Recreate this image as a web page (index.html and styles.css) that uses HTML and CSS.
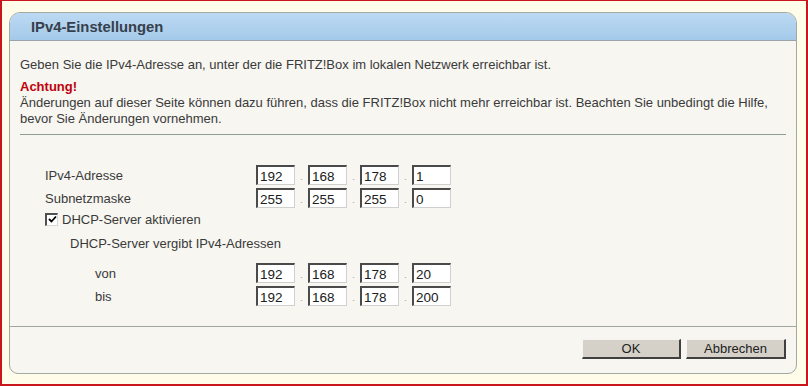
FILE: index.html
```html
<!DOCTYPE html>
<html lang="de">
<head>
<meta charset="utf-8">
<title>IPv4-Einstellungen</title>
<link rel="stylesheet" href="styles.css">
</head>
<body>
<div class="frame">
  <div class="panel">
    <div class="panel-head">IPv4-Einstellungen</div>
    <div class="panel-body">
      <p class="intro">Geben Sie die IPv4-Adresse an, unter der die FRITZ!Box im lokalen Netzwerk erreichbar ist.</p>
      <p class="warn-title">Achtung!</p>
      <p class="warn-text">Änderungen auf dieser Seite können dazu führen, dass die FRITZ!Box nicht mehr erreichbar ist. Beachten Sie unbedingt die Hilfe, bevor Sie Änderungen vornehmen.</p>
      <hr class="sep">
      <div class="form">
        <div class="row">
          <span class="label">IPv4-Adresse</span>
          <span class="ip"><input class="oct" value="192"><span class="dot">.</span><input class="oct" value="168"><span class="dot">.</span><input class="oct" value="178"><span class="dot">.</span><input class="oct" value="1"></span>
        </div>
        <div class="row">
          <span class="label">Subnetzmaske</span>
          <span class="ip"><input class="oct" value="255"><span class="dot">.</span><input class="oct" value="255"><span class="dot">.</span><input class="oct" value="255"><span class="dot">.</span><input class="oct" value="0"></span>
        </div>
        <div class="check-row">
          <span class="checkbox"><svg width="9" height="9" viewBox="0 0 9 9"><path d="M1 4 L3.5 6.5 L8 1.5" fill="none" stroke="#000" stroke-width="1.8"/></svg></span>
          <span>DHCP-Server aktivieren</span>
        </div>
        <div class="sub-title">DHCP-Server vergibt IPv4-Adressen</div>
        <div class="row">
          <span class="label label-deep">von</span>
          <span class="ip"><input class="oct" value="192"><span class="dot">.</span><input class="oct" value="168"><span class="dot">.</span><input class="oct" value="178"><span class="dot">.</span><input class="oct" value="20"></span>
        </div>
        <div class="row">
          <span class="label label-deep">bis</span>
          <span class="ip"><input class="oct" value="192"><span class="dot">.</span><input class="oct" value="168"><span class="dot">.</span><input class="oct" value="178"><span class="dot">.</span><input class="oct" value="200"></span>
        </div>
      </div>
    </div>
    <div class="panel-foot">
      <button class="btn btn-ok">OK</button>
      <button class="btn btn-cancel">Abbrechen</button>
    </div>
  </div>
</div>
</body>
</html>
```
FILE: styles.css
```css
* { box-sizing: border-box; }
html, body { margin: 0; padding: 0; }
body {
  width: 808px;
  height: 386px;
  overflow: hidden;
  font-family: "Liberation Sans", Arial, sans-serif;
  font-size: 13px;
  color: #3a3a3a;
}
.frame {
  width: 808px;
  height: 386px;
  background: #fffcea;
  border-style: solid;
  border-color: #c8161c;
  border-width: 1px 2px 2px 2px;
  padding: 11px 0 0 7px;
}
.panel {
  width: 788px;
  height: 362px;
  border: 1px solid #a3a9a3;
  border-radius: 11px 11px 9px 9px;
  background: #f7f6f1;
  display: flex;
  flex-direction: column;
  overflow: hidden;
}
.panel-head {
  height: 28px;
  background: linear-gradient(#bcd9f3, #a4cae9);
  border-bottom: 1px solid #9aa4a8;
  padding: 5px 0 0 21px;
  font-weight: bold;
  font-size: 14.8px;
  color: #36404c;
  line-height: 18px;
}
.panel-body {
  padding: 16px 10px 0 10px;
  flex: 1;
}
p { margin: 0; line-height: 16px; }
.intro { margin-bottom: 6px; }
.warn-title { color: #c0000c; font-weight: bold; }
.sep {
  margin: 7px 0 0 0;
  border: 0;
  border-top: 1px solid #8e9e8e;
  height: 0;
}
.form {
  padding: 30px 0 0 25px;
}
.row {
  display: flex;
  align-items: center;
  height: 20px;
  margin-bottom: 3px;
}
.label { width: 211px; padding-top: 1px; }
.label-deep { padding-left: 50px; }
.ip { display: flex; align-items: center; }
.oct {
  width: 39px;
  height: 20px;
  margin: 0;
  padding: 1px 0 0 2px;
  border-style: solid;
  border-width: 2px 1px 1px 2px;
  border-color: #4a4a4a #cfcfcf #cfcfcf #4a4a4a;
  background: #fff;
  font-family: "Liberation Sans", Arial, sans-serif;
  font-size: 13.5px;
  color: #202020;
  outline: none;
}
.dot {
  width: 13px;
  text-align: center;
  color: #9a9a9a;
  font-size: 9px;
  line-height: 20px;
  padding-top: 4px;
}
.check-row {
  display: flex;
  align-items: center;
  gap: 4px;
  height: 16px;
  margin-top: 0;
}
.checkbox {
  width: 13px;
  height: 13px;
  background: #fff;
  border-style: solid;
  border-width: 2px 1px 1px 2px;
  border-color: #505050 #d8d8d8 #d8d8d8 #505050;
  display: flex;
  align-items: center;
  justify-content: center;
}
.sub-title {
  padding-left: 25px;
  margin-top: 9px;
  line-height: 16px;
  margin-bottom: 11px;
}
.panel-foot {
  border-top: 1px solid #a0a6a0;
  height: 47px;
  display: flex;
  justify-content: flex-end;
  align-items: flex-start;
  gap: 5px;
  padding: 12px 10px 0 0;
}
.btn {
  height: 20px;
  margin: 0;
  padding: 0;
  background: #d5d1c9;
  border-style: solid;
  border-width: 1px 2px 2px 1px;
  border-color: #f4f4f4 #404040 #404040 #f4f4f4;
  font-family: "Liberation Sans", Arial, sans-serif;
  font-size: 13px;
  color: #222;
}
.btn-ok { width: 99px; }
.btn-cancel { width: 100px; }
```
